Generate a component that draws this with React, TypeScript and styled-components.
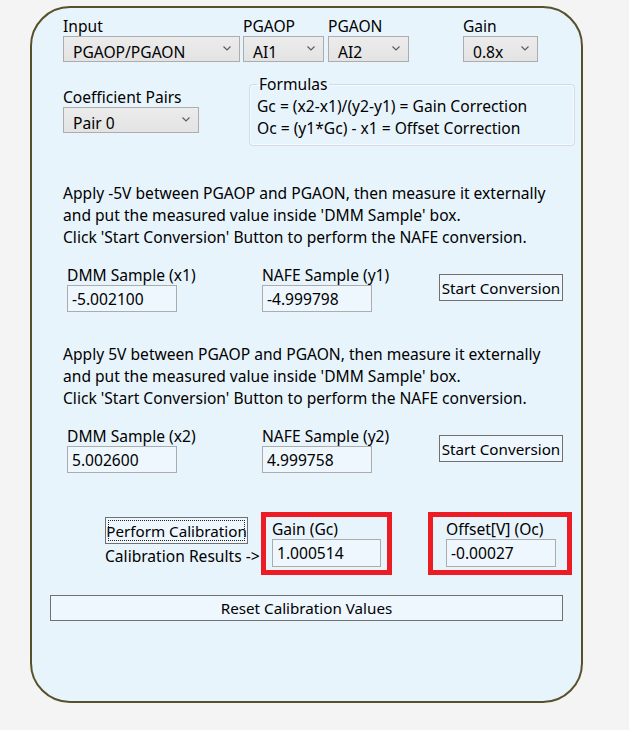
import React from "react";
import styled, { createGlobalStyle } from "styled-components";

const Global = createGlobalStyle`
  html, body { margin: 0; padding: 0; background: #f4f4f4; }
  body {
    font-family: "Noto Sans", "Open Sans", sans-serif;
    font-size: 15.6px;
    color: #000;
  }
  * { box-sizing: border-box; }
`;

const Panel = styled.div`
  margin: 6px 0 0 30px;
  width: 553px;
  height: 697px;
  border: 2px solid #57512b;
  border-radius: 40px;
  background: #e8f4fc;
  padding: 8px 0 0 18px;
`;

const TopRow = styled.div`
  display: flex;
  align-items: flex-start;
  padding-left: 13px;
`;

const Field = styled.div<{ $w: number; $ml?: number; $pt?: number }>`
  display: flex;
  flex-direction: column;
  width: ${(p) => p.$w}px;
  margin-left: ${(p) => p.$ml ?? 0}px;
  padding-top: ${(p) => p.$pt ?? 0}px;
  flex: none;
`;

const Label = styled.span`
  line-height: 20px;
  height: 20px;
  white-space: nowrap;
`;

const SelectBox = styled.div`
  display: flex;
  align-items: center;
  justify-content: space-between;
  height: 26px;
  border: 1px solid #adadad;
  background: linear-gradient(#ececec, #e3e3e3);
  padding: 0 8px 0 9px;
`;

const SelectText = styled.span`
  padding-top: 5px;
  line-height: 18px;
  white-space: nowrap;
`;

const Chevron = styled.svg`
  width: 8px;
  height: 5px;
  margin-top: -2px;
  flex: none;
`;

const Select = ({ value }: { value: string }) => (
  <SelectBox>
    <SelectText>{value}</SelectText>
    <Chevron viewBox="0 0 8 5">
      <polyline points="0.5,0.5 4,4 7.5,0.5" fill="none" stroke="#5a5a5a" strokeWidth="1.1" />
    </Chevron>
  </SelectBox>
);

const SecondRow = styled.div`
  display: flex;
  align-items: flex-start;
  margin-top: 12px;
  padding-left: 13px;
`;

const Formulas = styled.fieldset`
  margin: 0 0 0 50px;
  padding: 1px 0 6px 7px;
  width: 326px;
  border: 1px solid #d3dbe2;
  border-radius: 4px;
  box-shadow: inset 0 0 0 1px #f7fbff;
  line-height: 22px;
  min-width: 0;
`;

const Legend = styled.legend`
  padding: 0 2px;
  line-height: 20px;
`;

const Line = styled.div`
  white-space: nowrap;
`;

const Paragraph = styled.div<{ $mt: number }>`
  margin-top: ${(p) => p.$mt}px;
  padding-left: 13px;
  line-height: 22px;
`;

const SampleRow = styled.div`
  display: flex;
  align-items: flex-start;
  margin-top: 17px;
  padding-left: 17px;
`;

const TextBox = styled.div<{ $h?: number }>`
  height: ${(p) => p.$h ?? 27}px;
  border: 1px solid #acacac;
  background: #eef7fe;
  padding-left: 4px;
  display: flex;
  align-items: center;
  white-space: nowrap;
`;

const Button = styled.button<{ $w: number; $ml?: number; $mt?: number; $h?: number }>`
  width: ${(p) => p.$w}px;
  height: ${(p) => p.$h ?? 27}px;
  margin-left: ${(p) => p.$ml ?? 0}px;
  margin-top: ${(p) => p.$mt ?? 0}px;
  border: 1px solid #707070;
  background: #eef7fe;
  font-family: inherit;
  font-size: 15.2px;
  color: #000;
  padding: 0;
  white-space: nowrap;
  overflow: hidden;
  flex: none;
  position: relative;
`;

const FocusRing = styled.span`
  position: absolute;
  inset: 2px;
  border: 1px dotted #222;
  pointer-events: none;
`;

const CalibRow = styled.div`
  display: flex;
  align-items: flex-start;
  margin-top: 39px;
  padding-left: 55px;
`;

const CalibLeft = styled.div`
  display: flex;
  flex-direction: column;
  margin-top: 5px;
  width: 143px;
  flex: none;
`;

const ResultsText = styled.span`
  margin-top: 2px;
  line-height: 20px;
  white-space: nowrap;
`;

const RedBox = styled.div<{ $ml: number; $pl: number; $pr: number }>`
  display: flex;
  flex-direction: column;
  margin-left: ${(p) => p.$ml}px;
  border: 5px solid #ed1c24;
  padding: 2px ${(p) => p.$pr}px 3px ${(p) => p.$pl}px;
  flex: none;
`;

const ResetRow = styled.div`
  margin-top: 20px;
`;

export default function App() {
  return (
    <>
      <Global />
      <Panel>
        <TopRow>
          <Field $w={177}>
            <Label>Input</Label>
            <Select value="PGAOP/PGAON" />
          </Field>
          <Field $w={81} $ml={3}>
            <Label>PGAOP</Label>
            <Select value="AI1" />
          </Field>
          <Field $w={81} $ml={4}>
            <Label>PGAON</Label>
            <Select value="AI2" />
          </Field>
          <Field $w={75} $ml={54}>
            <Label>Gain</Label>
            <Select value="0.8x" />
          </Field>
        </TopRow>

        <SecondRow>
          <Field $w={136} $pt={13}>
            <Label>Coefficient Pairs</Label>
            <Select value="Pair 0" />
          </Field>
          <Formulas>
            <Legend>Formulas</Legend>
            <Line>Gc = (x2-x1)/(y2-y1) = Gain Correction</Line>
            <Line>Oc = (y1*Gc) - x1 = Offset Correction</Line>
          </Formulas>
        </SecondRow>

        <Paragraph $mt={36}>
          <Line>Apply -5V between PGAOP and PGAON, then measure it externally</Line>
          <Line>and put the measured value inside 'DMM Sample' box.</Line>
          <Line>Click 'Start Conversion' Button to perform the NAFE conversion.</Line>
        </Paragraph>

        <SampleRow>
          <Field $w={110}>
            <Label>DMM Sample (x1)</Label>
            <TextBox>-5.002100</TextBox>
          </Field>
          <Field $w={110} $ml={85}>
            <Label>NAFE Sample (y1)</Label>
            <TextBox>-4.999798</TextBox>
          </Field>
          <Button $w={124} $ml={67} $mt={9}>Start Conversion</Button>
        </SampleRow>

        <Paragraph $mt={31}>
          <Line>Apply 5V between PGAOP and PGAON, then measure it externally</Line>
          <Line>and put the measured value inside 'DMM Sample' box.</Line>
          <Line>Click 'Start Conversion' Button to perform the NAFE conversion.</Line>
        </Paragraph>

        <SampleRow>
          <Field $w={110}>
            <Label>DMM Sample (x2)</Label>
            <TextBox>5.002600</TextBox>
          </Field>
          <Field $w={110} $ml={85}>
            <Label>NAFE Sample (y2)</Label>
            <TextBox>4.999758</TextBox>
          </Field>
          <Button $w={124} $ml={67} $mt={9}>Start Conversion</Button>
        </SampleRow>

        <CalibRow>
          <CalibLeft>
            <Button $w={143}>
              Perform Calibration
              <FocusRing />
            </Button>
            <ResultsText>Calibration Results -&gt;</ResultsText>
          </CalibLeft>
          <RedBox $ml={13} $pl={6} $pr={6}>
            <Label>Gain (Gc)</Label>
            <Field $w={109}>
              <TextBox $h={28}>1.000514</TextBox>
            </Field>
          </RedBox>
          <RedBox $ml={36} $pl={13} $pr={11}>
            <Label>Offset[V] (Oc)</Label>
            <Field $w={110}>
              <TextBox $h={28}>-0.00027</TextBox>
            </Field>
          </RedBox>
        </CalibRow>

        <ResetRow>
          <Button $w={513} $h={26}>Reset Calibration Values</Button>
        </ResetRow>
      </Panel>
    </>
  );
}
